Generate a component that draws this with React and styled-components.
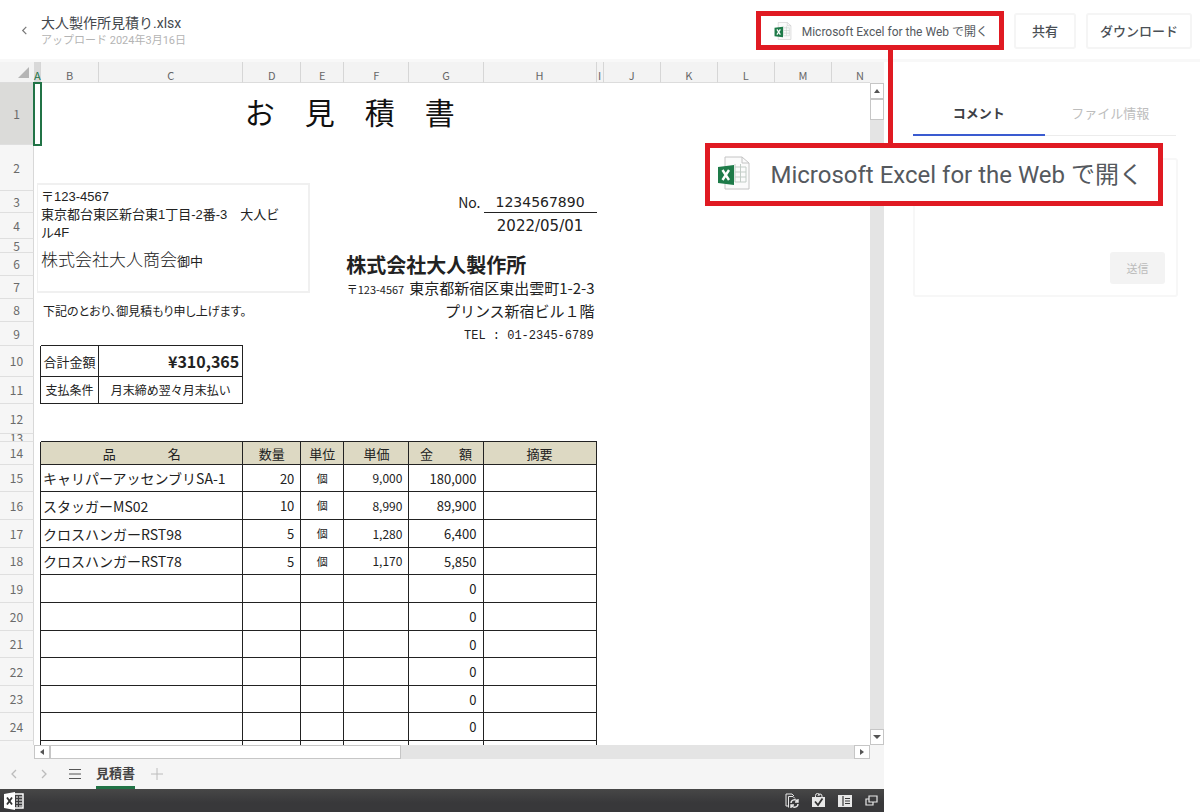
import React, { useState } from 'react';
import styled, { createGlobalStyle, css } from 'styled-components';

const jp = '"Noto Sans CJK JP", sans-serif';

const GlobalStyle = createGlobalStyle`
  * { box-sizing: border-box; }
  body {
    margin: 0;
    background: #fff;
    color: #4a4f55;
    font-family: Roboto, ${jp};
  }
  button, textarea { font-family: inherit; }
  button { padding: 0; border: 0; background: none; cursor: pointer; }
`;

const red = '#e01a22';

/* ---------- sheet data ---------- */

const columns = [
  ['A', 7], ['B', 58], ['C', 144], ['D', 58], ['E', 43], ['F', 65], ['G', 74],
  ['H', 113], ['I', 7], ['J', 57], ['K', 57], ['L', 57], ['M', 57], ['N', 57],
];

const items = [
  { name: 'キャリパーアッセンブリSA-1', count: '20', unit: '個', price: '9,000', total: '180,000' },
  { name: 'スタッガーMS02', count: '10', unit: '個', price: '8,990', total: '89,900' },
  { name: 'クロスハンガーRST98', count: '5', unit: '個', price: '1,280', total: '6,400' },
  { name: 'クロスハンガーRST78', count: '5', unit: '個', price: '1,170', total: '5,850' },
];

const itemHeights = [27, 28, 28, 27, 28, 28, 27, 28, 27, 28];

/* ---------- page ---------- */

const Page = styled.div`
  display: flex;
  flex-direction: column;
  height: 100vh;
  overflow: hidden;
`;

const Header = styled.header`
  display: flex;
  align-items: center;
  flex: none;
  height: 62px;
  padding: 2px 8px 0 16px;
  border-bottom: 3px solid #f8f8f8;
`;

const BackButton = styled.button`
  display: flex;
  width: 16px;
  margin-right: 9px;
  justify-content: center;
  color: #777;
`;

const FileInfo = styled.div`
  flex: 1;
  min-width: 0;
  padding-top: 2px;
`;

const FileName = styled.h1`
  margin: 0;
  font-size: 14px;
  line-height: 18px;
  font-weight: 400;
  color: #44484d;
`;

const Uploaded = styled.div`
  font-size: 11px;
  line-height: 18px;
  color: #b4b4b4;
`;

const Actions = styled.div`
  display: flex;
  align-items: center;
  gap: 10px;
`;

const Highlight = styled.div`
  position: relative;
  border: 5px solid ${red};
  background: #fff;
`;

const Connector = styled.span`
  position: absolute;
  z-index: 5;
  top: 100%;
  left: 127px;
  width: 5px;
  height: 99px;
  background: ${red};
`;

const OpenButton = styled.button`
  display: flex;
  align-items: center;
  gap: ${(p) => (p.$large ? 19 : 10)}px;
  height: ${(p) => (p.$large ? 53 : 29)}px;
  padding: ${(p) => (p.$large ? '0 15px 4px 7px' : '0 11px 0 13px')};
  font-size: ${(p) => (p.$large ? 24 : 12)}px;
  white-space: nowrap;
  color: #55595e;
  svg { width: ${(p) => (p.$large ? 34 : 18)}px; }
`;

const ActionButton = styled.button`
  height: 36px;
  padding: 0 ${(p) => (p.$narrow ? 16 : 12)}px;
  border: 2px solid #f5f5f5;
  border-radius: 3px;
  font-size: 13px;
  font-weight: 500;
  color: #4a4f55;
`;

const Main = styled.main`
  display: flex;
  flex: 1;
  min-height: 0;
`;

/* ---------- workbook ---------- */

const Workbook = styled.section`
  display: flex;
  flex-direction: column;
  flex: 1;
  min-width: 0;
  background: #f5f5f5;
`;

const SheetArea = styled.div`
  display: flex;
  flex: 1;
  min-height: 0;
`;

const SheetView = styled.div`
  position: relative;
  flex: 1;
  min-width: 0;
  overflow: hidden;
  background: #fff;
`;

const Table = styled.table`
  width: 889px;
  table-layout: fixed;
  border-spacing: 0;
  font-family: ${jp};
  font-size: 13px;
  line-height: 1;
  color: #222;
`;

const Corner = styled.td`
  height: 21px;
  padding: 0 5px 4px 0;
  background: #f3f3f3;
  border-bottom: 1px solid #dcdcdc;
  vertical-align: bottom;
  svg { display: block; margin-left: auto; }
`;

const ColHead = styled.th`
  height: 21px;
  padding: 6px 0 0;
  font-size: 11px;
  font-weight: 400;
  color: #666;
  background: #f3f3f3;
  border-right: 1px solid #d6d6d6;
  border-bottom: 1px solid #dcdcdc;
  ${(p) => p.$selected && css`
    color: #217346;
    background: #d9d9d9;
  `}
`;

const RowHead = styled.th`
  padding: 0;
  font-size: 12px;
  font-weight: 400;
  color: #6a6a6a;
  background: ${(p) => (p.$selected ? '#dbdbd9' : '#f6f6f6')};
  border-right: 1px solid #d8d8d8;
  border-bottom: 1px solid #dfdfdf;
`;

/* very low rows cut their number off */
const RowLabel = styled.div`
  display: flex;
  align-items: center;
  justify-content: center;
  height: ${(p) => p.$h - 1}px;
  ${(p) => p.$h < 12 && 'overflow: hidden;'}
`;

const Cell = styled.td`
  padding: 0 ${(p) => p.$pad ?? 0}px;
  text-align: ${(p) => p.$align || 'left'};
  font-size: ${(p) => p.$size || 13}px;
  font-weight: ${(p) => (p.$bold ? 700 : 400)};
  white-space: nowrap;
  ${(p) => p.$right && 'border-right: 1px solid #222;'}
  ${(p) => p.$bottom && 'border-bottom: 1px solid #222;'}
  ${(p) => p.$head && 'background: #ddd9c3;'}
  ${(p) => p.$latin && 'font-family: "DejaVu Sans", sans-serif;'}
`;

const SelectedCell = styled.td`
  padding: 0;
  outline: 2px solid #217346;
  outline-offset: -1px;
`;

const TitleCell = styled.td`
  padding: 0 0 7px 62px;
  text-align: center;
  font-size: 30px;
  color: #111;
`;

const Lead = styled.span`
  font-size: 12px;
  font-feature-settings: "palt";
`;

const Zip = styled.span`
  margin-right: 5px;
  font-size: 11px;
`;

const Tel = styled.span`
  font-family: "Liberation Mono", monospace;
  font-size: 12px;
`;

const AddressBox = styled.div`
  position: absolute;
  top: 121px;
  left: 37px;
  width: 273px;
  height: 110px;
  padding: 3px 20px 0 3px;
  border: 2px solid #f0f0f0;
  border-left-width: 1px;
  background: #fff;
  font-family: "Liberation Sans", ${jp};
  font-size: 13px;
  line-height: 18px;
  color: #222;
`;

const Recipient = styled.div`
  margin-top: 9px;
  line-height: 20px;
  big { font-size: 17px; font-weight: 300; }
`;

/* ---------- scroll bars ---------- */

const VBar = styled.div`
  display: flex;
  flex-direction: column;
  width: 14px;
  padding-top: 21px;
  background: linear-gradient(#f3f3f3 21px, #e4e4e4 21px);
`;

const HBar = styled.div`
  display: flex;
  flex: none;
  height: 14px;
  margin: 0 14px 0 34px;
  background: #e4e4e4;
`;

const Arrow = styled.button`
  display: flex;
  align-items: center;
  justify-content: center;
  flex: 0 0 16px;
  border: 1px solid #c6c6c6;
  background: #fff;
  cursor: default;
`;

const Thumb = styled.div`
  flex: 0 0 ${(p) => p.$size};
  border: 1px solid #c6c6c6;
  background: #fff;
`;

const Spacer = styled.div`
  flex: 1;
`;

/* ---------- tabs and status ---------- */

const SheetTabs = styled.nav`
  display: flex;
  align-items: center;
  flex: none;
  height: 30px;
  padding-left: 6px;
  color: #bcbcbc;
`;

const TabTool = styled.button`
  display: flex;
  align-items: center;
  justify-content: center;
  width: ${(p) => p.$w}px;
  height: 28px;
  color: inherit;
  ${(p) => p.$dark && 'color: #555;'}
`;

const SheetTab = styled.button`
  height: 30px;
  margin: 0 12px;
  border-bottom: 3px solid #217346;
  font-family: ${jp};
  font-size: 13px;
  line-height: 22px;
  font-weight: 700;
  color: #444;
`;

const StatusBar = styled.footer`
  display: flex;
  align-items: center;
  flex: none;
  gap: 13px;
  height: 23px;
  padding: 0 6px 0 4px;
  background: linear-gradient(#474747, #38383a 60%);
  color: #e8e8e8;
`;

/* ---------- comment panel ---------- */

const Sidebar = styled.aside`
  flex: 0 0 316px;
  padding: 28px 22px 0 29px;
`;

const PanelTabs = styled.div`
  display: flex;
  margin-right: 2px;
`;

const PanelTab = styled.button`
  flex: 1;
  height: 46px;
  font-size: 13px;
  font-weight: ${(p) => (p.$active ? 700 : 400)};
  color: ${(p) => (p.$active ? '#3c4045' : '#bdbdbd')};
  border-bottom: ${(p) => (p.$active ? '2px solid #3a5bd0' : '1px solid #ececec')};
`;

const CommentForm = styled.form`
  display: flex;
  flex-direction: column;
  align-items: flex-end;
  height: 139px;
  margin-top: 22px;
  padding: 9px 11px 11px;
  border: 2px solid #f7f7f7;
  border-radius: 3px;
`;

const CommentInput = styled.textarea`
  flex: 1;
  width: 100%;
  border: 0;
  outline: 0;
  resize: none;
`;

const SendButton = styled.button`
  width: 55px;
  height: 32px;
  border-radius: 3px;
  background: #f3f3f3;
  font-size: 11px;
  color: #bbb;
`;

const Callout = styled.div`
  position: absolute;
  z-index: 6;
  top: 143px;
  right: 37px;
  border: 5px solid ${red};
  background: #fff;
`;

/* ---------- icons ---------- */

function ExcelIcon() {
  return (
    <svg viewBox="0 0 34 34" fill="none" aria-hidden="true">
      <path d="M8 1h17l7 6v26H8z" fill="#fbfbfb" stroke="#c4c4c4" />
      <path d="M25 1v6h7" stroke="#c4c4c4" />
      <path d="M18 11h11M18 16h11M18 21h11M18 26h11M18 8v18M23.500 8v18M29 11v15" stroke="#c3cdc7" />
      <path d="M1 11l16-2v20L1 27z" fill="#1e7b49" />
      <path d="M5.500 14l6.500 10M12 14L5.500 24" stroke="#fff" strokeWidth="2.400" />
    </svg>
  );
}

function Chevron({ left, size = 10 }) {
  return (
    <svg width={size} height={size} viewBox="0 0 10 10" fill="none" stroke="currentColor" strokeWidth="1.300" aria-hidden="true">
      <path d={left ? 'M7 1L3 5l4 4' : 'M3 1l4 4-4 4'} />
    </svg>
  );
}

const arrowPaths = {
  up: 'M1 6l3-4 3 4z',
  down: 'M0 2h8L4 6z',
  left: 'M6 1v6L2 4z',
  right: 'M2 1v6l4-3z',
};

function ScrollArrow({ dir, label }) {
  return (
    <Arrow type="button" aria-label={label}>
      <svg width="8" height="8" viewBox="0 0 8 8" fill="#555"><path d={arrowPaths[dir]} /></svg>
    </Arrow>
  );
}

function StatusIcons() {
  return (
    <>
      <svg width="20" height="18" viewBox="0 0 20 18" aria-label="Excel">
        <path d="M0 2l11-2v18L0 16z" fill="#fff" />
        <path d="M11 2h8v14h-8" fill="none" stroke="#fff" strokeWidth="1.500" />
        <path d="M12 5h2m1 0h3M12 8h2m1 0h3M12 11h2m1 0h3M12 14h2m1 0h3" stroke="#fff" />
        <path d="M3 5.500l5 7M8 5.500l-5 7" stroke="#333" strokeWidth="1.800" />
      </svg>
      <Spacer />
      <svg width="14" height="15" viewBox="0 0 14 15" fill="none" stroke="currentColor" aria-hidden="true">
        <path d="M4 13H1V1h6l2 2M3.500 14.500v-11H8l2 2" />
        <path d="M6 10a3.500 3.500 0 0 1 6.500-1.500M13 6v3h-3M13 11a3.500 3.500 0 0 1-6.500 1.500M6 15v-3h3" strokeWidth="1.400" />
      </svg>
      <svg width="13" height="15" viewBox="0 0 13 15" aria-hidden="true">
        <path d="M0 4h13v10H0z" fill="currentColor" />
        <path d="M3.500 4V2.500a2 2 0 0 1 4 0M6 3a2 2 0 0 1 4 0v1" fill="none" stroke="currentColor" />
        <path d="M3 8.500l3 3.500 4.500-6.500" fill="none" stroke="#333" strokeWidth="1.800" />
      </svg>
      <svg width="14" height="12" viewBox="0 0 14 12" aria-hidden="true">
        <path d="M0 0h14v12H0z" fill="currentColor" />
        <path d="M5 1v10M7 3.500h5M7 6h5M7 8.500h5" stroke="#3a3a3a" strokeWidth="1.200" />
      </svg>
      <svg width="13" height="11" viewBox="0 0 13 11" fill="none" stroke="currentColor" strokeWidth="1.200" aria-hidden="true">
        <path d="M4 1h8v6H4zM4 4H1v6h7V7" />
      </svg>
    </>
  );
}

/* ---------- sheet ---------- */

function Row({ no, h, selected, children }) {
  return (
    <tr>
      <RowHead scope="row" $selected={selected}><RowLabel $h={h}>{no}</RowLabel></RowHead>
      {children}
    </tr>
  );
}

function ItemRow({ no, h, item = {}, total }) {
  return (
    <Row no={no} h={h}>
      <Cell $right />
      <Cell colSpan={2} $size={14} $pad={2} $right $bottom>{item.name}</Cell>
      <Cell $align="right" $pad={6} $right $bottom>{item.count}</Cell>
      <Cell $align="center" $size={11} $right $bottom>{item.unit}</Cell>
      <Cell $align="right" $size={12} $pad={6} $right $bottom>{item.price}</Cell>
      <Cell $align="right" $pad={6} $right $bottom>{total}</Cell>
      <Cell $right $bottom />
    </Row>
  );
}

function Sheet() {
  return (
    <Table>
      <colgroup>
        <col style={{ width: 34 }} />
        {columns.map(([name, width]) => <col key={name} style={{ width }} />)}
      </colgroup>
      <thead>
        <tr>
          <Corner><svg width="11" height="11" viewBox="0 0 11 11"><path d="M11 0v11H0z" fill="#b5b5b5" /></svg></Corner>
          {columns.map(([name]) => <ColHead key={name} scope="col" $selected={name === 'A'}>{name}</ColHead>)}
        </tr>
      </thead>
      <tbody>
        <Row no={1} h={62} selected>
          <SelectedCell />
          <TitleCell colSpan={7}>お　見　積　書</TitleCell>
        </Row>
        <Row no={2} h={46} />
        <Row no={3} h={22}>
          <Cell colSpan={6} />
          <Cell $align="right" $size={14} $pad={3}>No.</Cell>
          <Cell $align="center" $size={14} $latin $bottom>1234567890</Cell>
        </Row>
        <Row no={4} h={26}>
          <Cell colSpan={7} />
          <Cell $align="center" $size={15} $latin>2022/05/01</Cell>
        </Row>
        <Row no={5} h={14} />
        <Row no={6} h={23}>
          <Cell colSpan={5} />
          <Cell colSpan={3} $size={20} $pad={2} $bold>株式会社大人製作所</Cell>
        </Row>
        <Row no={7} h={23}>
          <Cell colSpan={5} />
          <Cell colSpan={3} $align="right" $size={15} $pad={2}><Zip>〒123-4567</Zip>東京都新宿区東出雲町1-2-3</Cell>
        </Row>
        <Row no={8} h={23}>
          <Cell />
          <Cell colSpan={4} $pad={2}><Lead>下記のとおり、御見積もり申し上げます。</Lead></Cell>
          <Cell colSpan={3} $align="right" $size={15} $pad={2}>プリンス新宿ビル１階</Cell>
        </Row>
        <Row no={9} h={24}>
          <Cell />
          <Cell colSpan={2} $bottom />
          <Cell colSpan={5} $align="right" $pad={3}><Tel>TEL : 01-2345-6789</Tel></Cell>
        </Row>
        <Row no={10} h={31}>
          <Cell $right />
          <Cell $align="center" $right $bottom>合計金額</Cell>
          <Cell $align="right" $size={16} $pad={3} $bold $right $bottom>¥310,365</Cell>
        </Row>
        <Row no={11} h={27}>
          <Cell $right />
          <Cell $align="center" $size={12} $right $bottom>支払条件</Cell>
          <Cell $align="center" $size={12} $right $bottom>月末締め翌々月末払い</Cell>
        </Row>
        <Row no={12} h={30} />
        <Row no={13} h={8}>
          <Cell />
          <Cell colSpan={7} $bottom />
        </Row>
        <Row no={14} h={23}>
          <Cell $right />
          <Cell colSpan={2} $align="center" $head $right $bottom>品　　　　名</Cell>
          <Cell $align="center" $head $right $bottom>数量</Cell>
          <Cell $align="center" $head $right $bottom>単位</Cell>
          <Cell $align="center" $head $right $bottom>単価</Cell>
          <Cell $align="center" $head $right $bottom>金　　額</Cell>
          <Cell $align="center" $head $right $bottom>摘要</Cell>
        </Row>
        {itemHeights.map((h, i) => (
          <ItemRow key={i} no={15 + i} h={h} item={items[i]} total={items[i] ? items[i].total : '0'} />
        ))}
        <ItemRow h={28} />
      </tbody>
    </Table>
  );
}

function App() {
  const [tab, setTab] = useState('comment');

  return (
    <Page>
      <GlobalStyle />
      <Header>
        <BackButton type="button" aria-label="戻る"><Chevron left size={9} /></BackButton>
        <FileInfo>
          <FileName>大人製作所見積り.xlsx</FileName>
          <Uploaded>アップロード 2024年3月16日</Uploaded>
        </FileInfo>
        <Actions>
          <Highlight>
            <OpenButton type="button"><ExcelIcon />Microsoft Excel for the Web で開く</OpenButton>
            <Connector />
          </Highlight>
          <ActionButton type="button" $narrow>共有</ActionButton>
          <ActionButton type="button">ダウンロード</ActionButton>
        </Actions>
      </Header>

      <Main>
        <Workbook>
          <SheetArea>
            <SheetView>
              <Sheet />
              <AddressBox>
                〒123-4567<br />
                東京都台東区新台東1丁目-2番-3　大人ビル4F
                <Recipient><big>株式会社大人商会</big>御中</Recipient>
              </AddressBox>
            </SheetView>
            <VBar>
              <ScrollArrow dir="up" label="上へ" />
              <Thumb $size="21px" />
              <Spacer />
              <ScrollArrow dir="down" label="下へ" />
            </VBar>
          </SheetArea>
          <HBar>
            <ScrollArrow dir="left" label="左へ" />
            <Thumb $size="42%" />
            <Spacer />
            <ScrollArrow dir="right" label="右へ" />
          </HBar>
          <SheetTabs>
            <TabTool type="button" $w={16} aria-label="前のシート"><Chevron left /></TabTool>
            <TabTool type="button" $w={44} aria-label="次のシート"><Chevron /></TabTool>
            <TabTool type="button" $w={18} $dark aria-label="シート一覧">
              <svg width="12" height="10" viewBox="0 0 12 10" stroke="currentColor"><path d="M0 .5h12M0 5h12M0 9.500h12" /></svg>
            </TabTool>
            <SheetTab type="button">見積書</SheetTab>
            <TabTool type="button" $w={20} aria-label="シートを追加">
              <svg width="12" height="12" viewBox="0 0 12 12" stroke="currentColor"><path d="M6 0v12M0 6h12" /></svg>
            </TabTool>
          </SheetTabs>
          <StatusBar><StatusIcons /></StatusBar>
        </Workbook>

        <Sidebar>
          <PanelTabs role="tablist">
            <PanelTab type="button" role="tab" $active={tab === 'comment'} onClick={() => setTab('comment')}>コメント</PanelTab>
            <PanelTab type="button" role="tab" $active={tab === 'info'} onClick={() => setTab('info')}>ファイル情報</PanelTab>
          </PanelTabs>
          <CommentForm onSubmit={(e) => e.preventDefault()}>
            <CommentInput aria-label="コメント" />
            <SendButton type="submit">送信</SendButton>
          </CommentForm>
        </Sidebar>
      </Main>

      <Callout>
        <OpenButton type="button" $large><ExcelIcon />Microsoft Excel for the Web で開く</OpenButton>
      </Callout>
    </Page>
  );
}

export default App;
